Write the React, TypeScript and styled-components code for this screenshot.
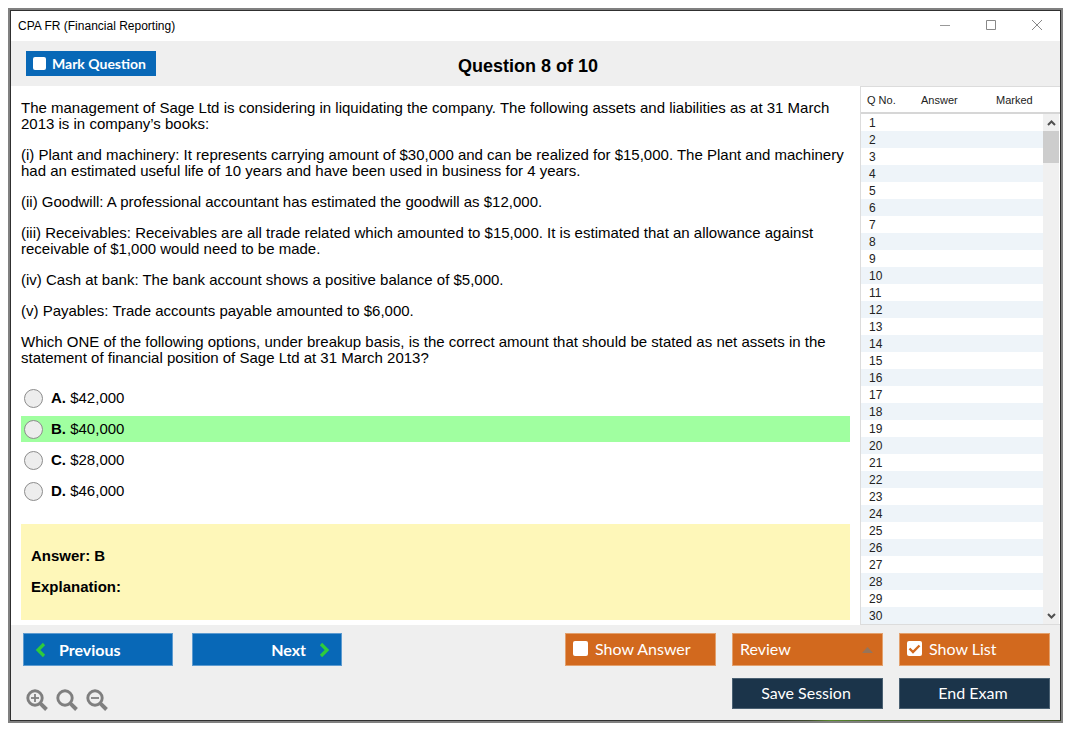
import React from "react";
import styled, { createGlobalStyle, css } from "styled-components";

const Global = createGlobalStyle`
  *, *::before, *::after { box-sizing: border-box; }
  body {
    margin: 0;
    background: #fff;
    color: #000;
    font-family: "Liberation Sans", Arial, sans-serif;
  }
  button, select, input { font: inherit; margin: 0; }
`;

const Page = styled.div`
  padding: 8px 12px 12px 8px;
`;

const Frame = styled.div`
  border: 2px solid #808080;
  padding: 1px;
  background:
    linear-gradient(90deg, #303030 72%, #3e4a2c 76%, #5a8a2c 78%, #4a6a2c 82%, #35401f 100%) bottom / 100% 1px no-repeat,
    #303030;
`;

const TitleBar = styled.header`
  display: flex;
  align-items: center;
  justify-content: space-between;
  height: 30px;
  padding: 0 8px 0 7px;
  background: #fff;
  font-size: 12px;
`;

const WindowControls = styled.div`
  display: flex;
  gap: 16px;
`;

const WindowButton = styled.button`
  display: grid;
  place-items: center;
  width: 30px;
  height: 28px;
  padding: 0;
  border: 0;
  background: none;
`;

const QuestionBar = styled.div`
  display: grid;
  grid-template-columns: 1fr auto 1fr;
  align-items: center;
  height: 45px;
  padding: 0 30px 0 15px;
  background: #efefef;
`;

const Heading = styled.h1`
  margin: 4px 0 0;
  font-size: 18px;
  line-height: 20px;
`;

const buttonFace = css`
  font-family: Lato, "Open Sans", sans-serif;
  color: #fff;
`;

const MarkLabel = styled.label`
  ${buttonFace}
  justify-self: start;
  display: flex;
  align-items: center;
  gap: 6px;
  width: 130px;
  height: 25px;
  padding: 0 7px;
  background: #0868b7;
  font-size: 14px;
  font-weight: 700;
  white-space: nowrap;
`;

const TickWrap = styled.span`
  display: grid;
  flex: none;
  > * { grid-area: 1 / 1; }
  svg { display: none; pointer-events: none; }
  input:checked + svg { display: block; }
`;

const TickInput = styled.input<{ $size: number }>`
  appearance: none;
  width: ${(p) => p.$size}px;
  height: ${(p) => p.$size}px;
  border-radius: 2px;
  background: #fff;
`;

const Body = styled.main`
  display: grid;
  grid-template-columns: minmax(0, 1fr) 200px;
  background: #fff;
`;

const Content = styled.section`
  padding: 14px 10px 5px;
  font-size: 15px;
  line-height: 16px;
`;

const Paragraph = styled.p`
  margin: 0 0 15px;
  &:last-child { margin-bottom: 0; }
`;

const Options = styled.fieldset`
  display: flex;
  flex-direction: column;
  gap: 5px;
  margin: 19px 0 20px;
  padding: 0;
  border: 0;
`;

const Option = styled.label<{ $correct?: boolean }>`
  display: flex;
  align-items: center;
  height: 26px;
  padding-left: 3px;
  background: ${(p) => (p.$correct ? "#a0ffa0" : "transparent")};
`;

const Radio = styled.input`
  appearance: none;
  width: 19px;
  height: 19px;
  margin-right: 8px;
  border: 1px solid #8c8c8c;
  border-radius: 50%;
  background: #ededed;
  &:checked { box-shadow: inset 0 0 0 4px #ededed; background: #333; }
`;

const AnswerBox = styled.div`
  padding: 24px 10px 25px;
  background: #fef7b9;
  font-weight: 700;
`;

const ListPanel = styled.aside`
  position: relative;
  border: 1px solid #dcdcdc;
  border-width: 1px 0 1px 1px;
`;

const QuestionTable = styled.table`
  width: 100%;
  border-collapse: collapse;
  table-layout: fixed;
  font-size: 11px;
  color: #222;
  th {
    height: 26px;
    padding: 0 0 0 6px;
    border-bottom: 2px solid #d6d6d6;
    font-weight: 400;
    text-align: left;
  }
  th:first-child { width: 54px; }
  th:nth-child(2) { width: 75px; }
  td { height: 17px; padding: 2px 0 0 8px; line-height: 15px; font-size: 12px; }
  tbody tr:nth-child(even) { background: #eef4f9; }
`;

const ScrollTrack = styled.div`
  position: absolute;
  top: 27px;
  right: 0;
  bottom: 0;
  display: flex;
  flex-direction: column;
  justify-content: space-between;
  width: 17px;
  border-right: 1px solid #fff;
  background: #f0f0f0;
`;

const ScrollButton = styled.button`
  display: grid;
  place-items: center;
  width: 16px;
  height: 17px;
  padding: 0;
  border: 0;
  background: none;
`;

const Thumb = styled.div`
  height: 32px;
  margin-bottom: auto;
  background: #cdcdcd;
`;

const Footer = styled.footer`
  display: flex;
  justify-content: space-between;
  height: 95px;
  padding: 8px 10px 0 12px;
  background: #efefef;
`;

const Navigation = styled.div`
  display: flex;
  flex-direction: column;
  gap: 22px;
`;

const NavRow = styled.div`
  display: flex;
  gap: 19px;
`;

const NavButton = styled.button<{ $end?: boolean }>`
  ${buttonFace}
  display: flex;
  align-items: center;
  justify-content: ${(p) => (p.$end ? "flex-end" : "flex-start")};
  gap: 13px;
  width: 150px;
  height: 33px;
  padding: 0 11px;
  border: 1px solid #5d9bd0;
  background: #0868b7;
  font-size: 16px;
  font-weight: 700;
`;

const ZoomRow = styled.div`
  display: flex;
  gap: 6px;
  padding-left: 2px;
`;

const ZoomButton = styled.button`
  display: block;
  width: 24px;
  height: 24px;
  padding: 0;
  border: 0;
  background: none;
  svg { display: block; }
`;

const Actions = styled.div`
  display: grid;
  grid-template-columns: repeat(3, 151px);
  grid-template-rows: 33px 31px;
  gap: 12px 16px;
`;

const ToggleLabel = styled.label`
  ${buttonFace}
  display: flex;
  align-items: center;
  gap: 7px;
  padding: 0 7px 2px;
  border: 1px solid #e3a06c;
  background: #d2691e;
  font-size: 16px;
`;

const ReviewWrap = styled.div`
  display: grid;
  align-items: center;
  > * { grid-area: 1 / 1; }
  svg { justify-self: end; margin-right: 10px; pointer-events: none; }
`;

const ReviewSelect = styled.select`
  ${buttonFace}
  appearance: none;
  width: 100%;
  height: 33px;
  padding: 0 7px 2px;
  border: 1px solid #e3a06c;
  border-radius: 0;
  background: #d2691e;
  font-size: 16px;
`;

const DarkButton = styled.button<{ $column: number }>`
  ${buttonFace}
  grid-column: ${(p) => p.$column};
  grid-row: 2;
  padding: 0 6px 2px 3px;
  border: 1px solid #4a6072;
  background: #1b344a;
  font-size: 16px;
`;

function Tick({ size, checked }: { size: number; checked?: boolean }) {
  return (
    <TickWrap>
      <TickInput type="checkbox" $size={size} defaultChecked={checked} />
      <svg width="15" height="15" viewBox="0 0 15 15" fill="none" stroke="#d2691e" strokeWidth="2.4">
        <path d="M2.5 7.5 6 11 12.5 4.5" />
      </svg>
    </TickWrap>
  );
}

function Chevron({ right }: { right?: boolean }) {
  return (
    <svg width="11" height="16" viewBox="0 0 11 16" fill="none" stroke="#2fcb3b" strokeWidth="3.2">
      <path d={right ? "M2 2 8 8 2 14" : "M9 2 3 8 9 14"} />
    </svg>
  );
}

function Magnifier({ sign }: { sign?: "plus" | "minus" }) {
  return (
    <svg width="24" height="24" viewBox="0 0 24 24" fill="none" stroke="#7f7f7f">
      <circle cx="10" cy="10" r="7.200" strokeWidth="2.9" />
      <path d="M15.3 15.3 21.5 21.5" strokeWidth="3.9" />
      {sign && <path d="M6 10H14" strokeWidth="1.8" />}
      {sign === "plus" && <path d="M10 6V14" strokeWidth="1.8" />}
    </svg>
  );
}

const paragraphs = [
  "The management of Sage Ltd is considering in liquidating the company. The following assets and liabilities as at 31 March 2013 is in company’s books:",
  "(i) Plant and machinery: It represents carrying amount of $30,000 and can be realized for $15,000. The Plant and machinery had an estimated useful life of 10 years and have been used in business for 4 years.",
  "(ii) Goodwill: A professional accountant has estimated the goodwill as $12,000.",
  "(iii) Receivables: Receivables are all trade related which amounted to $15,000. It is estimated that an allowance against receivable of $1,000 would need to be made.",
  "(iv) Cash at bank: The bank account shows a positive balance of $5,000.",
  "(v) Payables: Trade accounts payable amounted to $6,000.",
  "Which ONE of the following options, under breakup basis, is the correct amount that should be stated as net assets in the statement of financial position of Sage Ltd at 31 March 2013?",
];

const options = [
  { key: "A", text: "$42,000" },
  { key: "B", text: "$40,000" },
  { key: "C", text: "$28,000" },
  { key: "D", text: "$46,000" },
];

const questionNumbers = Array.from({ length: 30 }, (_, i) => i + 1);

export default function App() {
  return (
    <Page>
      <Global />
      <Frame>
        <TitleBar>
          <span>CPA FR (Financial Reporting)</span>
          <WindowControls>
            <WindowButton aria-label="Minimize">
              <svg width="12" height="12" fill="none" stroke="#999"><path d="M1 5.500H11" /></svg>
            </WindowButton>
            <WindowButton aria-label="Maximize">
              <svg width="12" height="12" fill="none" stroke="#888"><path d="M1.5 0.500H10.500V9.500H1.500Z" /></svg>
            </WindowButton>
            <WindowButton aria-label="Close">
              <svg width="12" height="12" fill="none" stroke="#888"><path d="M1 0 11 10M11 0 1 10" /></svg>
            </WindowButton>
          </WindowControls>
        </TitleBar>

        <QuestionBar>
          <MarkLabel>
            <Tick size={13} />
            Mark Question
          </MarkLabel>
          <Heading>Question 8 of 10</Heading>
        </QuestionBar>

        <Body>
          <Content>
            <div>
              {paragraphs.map((text) => (
                <Paragraph key={text}>{text}</Paragraph>
              ))}
            </div>
            <Options aria-label="Options">
              {options.map((o) => (
                <Option key={o.key} $correct={o.key === "B"}>
                  <Radio type="radio" name="answer" value={o.key} />
                  <span>
                    <b>{o.key}.</b> {o.text}
                  </span>
                </Option>
              ))}
            </Options>
            <AnswerBox>
              <Paragraph>Answer: B</Paragraph>
              <Paragraph>Explanation:</Paragraph>
            </AnswerBox>
          </Content>

          <ListPanel>
            <QuestionTable>
              <thead>
                <tr>
                  <th>Q No.</th>
                  <th>Answer</th>
                  <th>Marked</th>
                </tr>
              </thead>
              <tbody>
                {questionNumbers.map((n) => (
                  <tr key={n}>
                    <td>{n}</td>
                    <td />
                    <td />
                  </tr>
                ))}
              </tbody>
            </QuestionTable>
            <ScrollTrack>
              <ScrollButton aria-label="Scroll up">
                <svg width="9" height="8" fill="none" stroke="#505050" strokeWidth="2"><path d="M1 6 4.500 2.500 8 6" /></svg>
              </ScrollButton>
              <Thumb />
              <ScrollButton aria-label="Scroll down">
                <svg width="9" height="8" fill="none" stroke="#505050" strokeWidth="2"><path d="M1 2 4.500 5.500 8 2" /></svg>
              </ScrollButton>
            </ScrollTrack>
          </ListPanel>
        </Body>

        <Footer>
          <Navigation>
            <NavRow>
              <NavButton>
                <Chevron />
                Previous
              </NavButton>
              <NavButton $end>
                Next
                <Chevron right />
              </NavButton>
            </NavRow>
            <ZoomRow>
              <ZoomButton aria-label="Zoom in"><Magnifier sign="plus" /></ZoomButton>
              <ZoomButton aria-label="Reset zoom"><Magnifier /></ZoomButton>
              <ZoomButton aria-label="Zoom out"><Magnifier sign="minus" /></ZoomButton>
            </ZoomRow>
          </Navigation>
          <Actions>
            <ToggleLabel>
              <Tick size={15} />
              Show Answer
            </ToggleLabel>
            <ReviewWrap>
              <ReviewSelect aria-label="Review">
                <option>Review</option>
              </ReviewSelect>
              <svg width="11" height="6"><path d="M0 6 5.500 0 11 6Z" fill="#96745a" /></svg>
            </ReviewWrap>
            <ToggleLabel>
              <Tick size={15} checked />
              Show List
            </ToggleLabel>
            <DarkButton $column={2}>Save Session</DarkButton>
            <DarkButton $column={3}>End Exam</DarkButton>
          </Actions>
        </Footer>
      </Frame>
    </Page>
  );
}
